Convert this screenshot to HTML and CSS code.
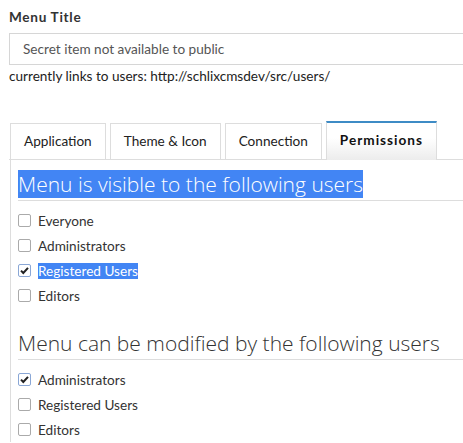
FILE: index.html
```html
<!DOCTYPE html>
<html>
<head>
<meta charset="utf-8">
<link rel="stylesheet" href="styles.css">
</head>
<body>
<div class="page">
  <div class="field">
    <label class="field-label">Menu Title</label>
    <div class="input">Secret item not available to public</div>
    <div class="help">currently links to users: http://schlixcmsdev/src/users/</div>
  </div>
  <div class="tabs">
    <div class="tab">Application</div>
    <div class="tab">Theme &amp; Icon</div>
    <div class="tab">Connection</div>
    <div class="tab active">Permissions</div>
  </div>
  <div class="pane">
    <h2 class="section-title"><span class="sel">Menu is visible to the following users</span></h2>
    <ul class="checks">
      <li><span class="box"></span><span>Everyone</span></li>
      <li><span class="box"></span><span>Administrators</span></li>
      <li><span class="box checked"><svg viewBox="0 0 13 13" width="13" height="13"><path d="M3 6.6 L5.3 9 L10 3.8" fill="none" stroke="#222" stroke-width="2"/></svg></span><span class="sel">Registered Users</span></li>
      <li><span class="box"></span><span>Editors</span></li>
    </ul>
    <h2 class="section-title second">Menu can be modified by the following users</h2>
    <ul class="checks">
      <li><span class="box checked"><svg viewBox="0 0 13 13" width="13" height="13"><path d="M3 6.6 L5.3 9 L10 3.8" fill="none" stroke="#222" stroke-width="2"/></svg></span><span>Administrators</span></li>
      <li><span class="box"></span><span>Registered Users</span></li>
      <li><span class="box"></span><span>Editors</span></li>
    </ul>
  </div>
</div>
</body>
</html>
```
FILE: styles.css
```css
html, body { margin: 0; padding: 0; background: #fff; }
body { font-family: "Lato", "Liberation Sans", sans-serif; font-size: 13.6px; color: #333; overflow: hidden; }
.page { padding: 9px 0 0 9px; }
.field-label { display: block; font-weight: bold; letter-spacing: 0.7px; color: #333; height: 17px; line-height: 17px; }
.input { margin-top: 7px; height: 30px; border: 1px solid #d6d6d6; border-right: none; padding-left: 13px; line-height: 30px; color: #555; }
.help { color: #222; line-height: 16px; margin-top: 3px; }
.tabs { display: flex; gap: 4px; margin-top: 37px; padding-left: 1px; border-bottom: 1px solid #ddd; align-items: flex-end; }
.tab { height: 35px; line-height: 35px; border: 1px solid #ddd; border-bottom: none; padding: 0 13px; color: #222; background: #fff; }
.tab.active { height: 36px; border-top: 2px solid #3e8bc5; font-weight: bold; letter-spacing: 1px; background: linear-gradient(#fff 40%, #ececec); margin-bottom: -1px; padding-bottom: 1px; color: #111; }
.pane { margin-left: 1px; border-left: 1px solid #ddd; padding: 10px 0 0 7px; }
.section-title { margin: 0; font-family: "Open Sans", sans-serif; font-weight: 300; font-size: 21px; line-height: 29px; color: #333; border-bottom: 1px solid #ddd; padding-bottom: 1px; }
.section-title.second { margin-top: 21px; }
.sel { background: #4285f4; color: #fff; }
.checks { list-style: none; margin: 7px 0 0; padding: 0; }
.checks li { display: flex; align-items: center; height: 25px; gap: 7px; color: #333; }
.box { width: 11px; height: 11px; border: 1px solid #aaa; border-radius: 2px; background: #fff; display: inline-flex; flex: none; }
.box.checked { border-color: #8aa7d6; }
.box svg { display: block; margin: -1px; }
```
